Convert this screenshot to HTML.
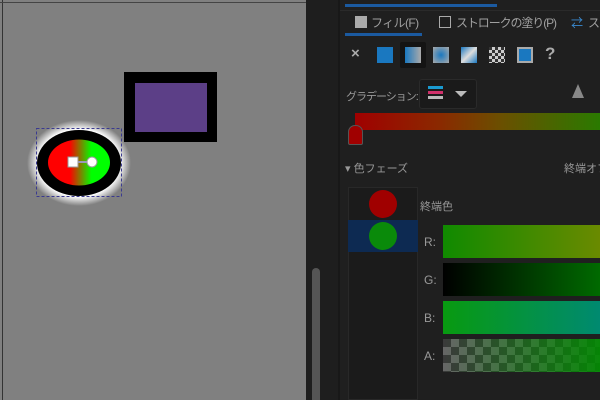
<!DOCTYPE html>
<html><head><meta charset="utf-8"><style>
*{margin:0;padding:0;box-sizing:border-box}
body{width:600px;height:400px;overflow:hidden;background:#1e1e1e;position:relative;font-family:"Liberation Sans","Noto Sans CJK JP",sans-serif;color:#a0a0a0;font-size:11px}
.a{position:absolute}
.bar{position:absolute;left:443px;width:157px;height:33px}
.lab{position:absolute;left:424px;font-size:12px;color:#999}
.ic{position:absolute;top:47px;width:16px;height:16px}
</style></head><body>
<div class="a" style="left:0;top:0;width:306px;height:400px;background:#808080"></div>
<div class="a" style="left:2px;top:0;width:1px;height:400px;background:#333"></div>
<div class="a" style="left:0;top:2px;width:306px;height:1px;background:#444"></div>
<svg class="a" style="left:0;top:0" width="306" height="400">
<defs>
<radialGradient id="gl" cx="50%" cy="50%" r="50%"><stop offset="78%" stop-color="#fff"/><stop offset="100%" stop-color="#fff" stop-opacity="0"/></radialGradient>
<linearGradient id="rg" x1="0" x2="1"><stop offset="0.35" stop-color="#ff0000"/><stop offset="0.7" stop-color="#00ff00"/></linearGradient>
</defs>
<ellipse cx="79" cy="163" rx="52" ry="43" fill="url(#gl)"/>
<ellipse cx="79" cy="163" rx="42" ry="33" fill="#000"/>
<ellipse cx="79" cy="162.5" rx="31" ry="23" fill="url(#rg)"/>
<rect x="36.5" y="128.5" width="85" height="68" fill="none" stroke="#3a3a90" stroke-dasharray="3,2"/>
<line x1="73" y1="162" x2="92" y2="162" stroke="#99b" stroke-width="2"/>
<rect x="68" y="157" width="10" height="10" fill="#fff" stroke="#999"/>
<circle cx="92" cy="162" r="5" fill="#fff" stroke="#999"/>
<rect x="124" y="72" width="93" height="70" fill="#000"/>
<rect x="135" y="83" width="72" height="49" fill="#5c3f87"/>
</svg>
<div class="a" style="left:312px;top:268px;width:8px;height:132px;background:#555;border-radius:4px 4px 0 0"></div>
<div class="a" style="left:338px;top:0;width:2px;height:400px;background:#181818"></div>
<div class="a" style="left:340px;top:0;width:260px;height:400px;background:#1f1f1f"></div>
<div class="a" style="left:345px;top:4px;width:152px;height:3px;background:#1b5aa0"></div>
<div class="a" style="left:340px;top:10px;width:260px;height:1px;background:#2a2a2a"></div>
<div class="a" style="left:355px;top:16px;width:12px;height:12px;background:#aaa"></div>
<div class="a" style="left:371px;top:14px;font-size:12px;letter-spacing:-0.6px;color:#a0a0a0">フィル(F)</div>
<div class="a" style="left:345px;top:33px;width:77px;height:3px;background:#1b5aa0"></div>
<div class="a" style="left:439px;top:16px;width:12px;height:12px;border:1.5px solid #aaa"></div>
<div class="a" style="left:456px;top:14px;font-size:12px;letter-spacing:-1.1px;color:#a0a0a0">ストロークの塗り(P)</div>
<div class="a" style="left:571px;top:14px;font-size:12px;color:#3a8ad0">⇄</div>
<div class="a" style="left:588px;top:14px;font-size:12px;color:#a0a0a0">ス</div>
<div class="a" style="left:351px;top:45px;font-size:15px;font-weight:bold;color:#aaa">×</div>
<div class="ic" style="left:377px;background:#1a78c0"></div>
<div class="a" style="left:400px;top:42px;width:26px;height:26px;background:#141414;border-radius:2px"></div>
<div class="ic" style="left:405px;background:linear-gradient(90deg,#1a78c0,#aaa)"></div>
<div class="ic" style="left:433px;background:radial-gradient(#1a78c0,#aaa)"></div>
<div class="ic" style="left:461px;background:linear-gradient(135deg,#1a78c0,#ddd 50%,#1a78c0)"></div>
<div class="ic" style="left:489px;background:repeating-conic-gradient(#ccc 0 25%,#333 0 50%) 0 0/6px 6px"></div>
<div class="ic" style="left:517px;border:2px solid #aaa;background:#1a78c0"></div>
<div class="a" style="left:545px;top:44px;font-size:17px;font-weight:bold;color:#aaa">?</div>
<div class="a" style="left:346px;top:88px;font-size:11px;letter-spacing:-1px;color:#999">グラデーション:</div>
<div class="a" style="left:419px;top:79px;width:58px;height:30px;background:#1a1a1a;border:1px solid #2a2a2a;border-radius:3px"></div>
<div class="a" style="left:428px;top:86px;width:15px;height:3px;background:#1a9ad0"></div>
<div class="a" style="left:428px;top:91px;width:15px;height:3px;background:#d0306a"></div>
<div class="a" style="left:428px;top:96px;width:15px;height:3px;background:#bbb"></div>
<div class="a" style="left:455px;top:91px;width:0;height:0;border-left:6px solid transparent;border-right:6px solid transparent;border-top:6px solid #bbb"></div>
<div class="a" style="left:572px;top:84px;width:0;height:0;border-left:6px solid transparent;border-right:6px solid transparent;border-bottom:14px solid #888"></div>
<div class="a" style="left:355px;top:113px;width:245px;height:17px;background:linear-gradient(90deg,#a00000,#8a2a00 35%,#6a5000 60%,#2a7a00)"></div>
<div class="a" style="left:348px;top:125px;width:15px;height:20px;background:#a00000;border:1px solid #555;border-radius:7px 7px 2px 2px"></div>
<div class="a" style="left:345px;top:160px;font-size:11px;color:#999">▾ 色フェーズ</div>
<div class="a" style="left:564px;top:160px;font-size:11px;color:#999;white-space:nowrap">終端オフ</div>
<div class="a" style="left:348px;top:187px;width:70px;height:213px;background:#1b1b1b;border:1px solid #282828"></div>
<div class="a" style="left:369px;top:190px;width:28px;height:28px;border-radius:50%;background:#a00000"></div>
<div class="a" style="left:348px;top:220px;width:70px;height:32px;background:#0d2a52"></div>
<div class="a" style="left:369px;top:222px;width:28px;height:28px;border-radius:50%;background:#0a8a0a"></div>
<div class="a" style="left:420px;top:198px;font-size:11px;color:#999">終端色</div>
<div class="lab" style="top:235px">R:</div>
<div class="lab" style="top:273px">G:</div>
<div class="lab" style="top:311px">B:</div>
<div class="lab" style="top:349px">A:</div>
<div class="bar" style="top:225px;background:linear-gradient(90deg,#108a00,#6a8a00)"></div>
<div class="bar" style="top:263px;background:linear-gradient(90deg,#000,#006a00)"></div>
<div class="bar" style="top:301px;background:linear-gradient(90deg,#089a10,#008a70)"></div>
<div class="bar" style="top:339px;background:linear-gradient(90deg,rgba(0,140,0,0),rgba(0,140,0,.9)),repeating-conic-gradient(#666 0 25%,#3a3a3a 0 50%) 0 0/16px 16px"></div>
</body></html>
